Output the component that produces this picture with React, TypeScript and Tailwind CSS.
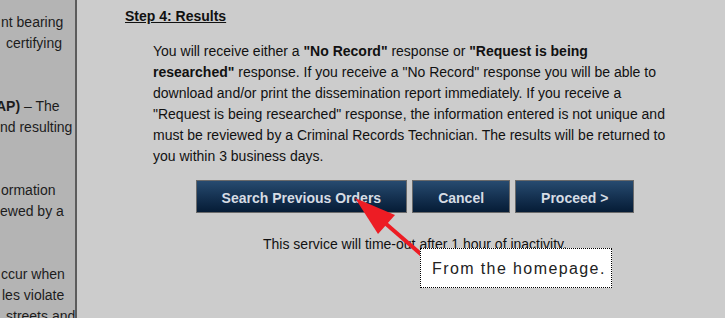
import React from 'react';

const sideLines: { text: React.ReactNode; indent: string }[] = [
  { text: 'nt bearing', indent: 'pl-[1px]' },
  { text: 'certifying', indent: 'pl-[6px]' },
  { text: '', indent: '' },
  { text: '', indent: '' },
  { text: <><b>AP)</b> – The</>, indent: '-ml-[4px]' },
  { text: 'nd resulting', indent: 'pl-0' },
  { text: '', indent: '' },
  { text: '', indent: '' },
  { text: 'ormation', indent: 'pl-[1px]' },
  { text: 'ewed by a', indent: 'pl-0' },
  { text: '', indent: '' },
  { text: '', indent: '' },
  { text: 'ccur when', indent: 'pl-[1px]' },
  { text: 'les violate', indent: 'pl-[2px]' },
  { text: 'streets and', indent: 'pl-[6px]' },
];

function NavButton({ label }: { label: string }) {
  return (
    <button className="border border-[#6a6a6a] bg-gradient-to-b from-[#274b70] to-[#061c36] px-[25px] pt-[7px] pb-[3px] text-[14px] leading-[21px] font-bold text-[#d6dce4]">
      {label}
    </button>
  );
}

export default function App() {
  return (
    <div
      className="relative flex h-[318px] w-[725px] overflow-hidden bg-[#cccccc] text-[14px] leading-[21px] text-[#111]"
      style={{ fontFamily: '"Liberation Sans", Arial, sans-serif' }}
    >
      {/* left column, cut off by the screenshot */}
      <aside className="w-[77px] shrink-0 overflow-hidden border-r-2 border-[#5c5c5c] bg-[#b4b4b4] pt-[12px] text-[#1c1c1c]">
        {sideLines.map((l, i) => (
          <div key={i} className={`h-[21px] whitespace-nowrap ${l.indent}`}>
            {l.text}
          </div>
        ))}
      </aside>

      <main className="flex-1 pl-[48px] pt-[6px]">
        <h2 className="font-bold underline">Step 4: Results</h2>

        <div className="ml-[28px] mt-[14px] w-[524px]">
          <p className="whitespace-nowrap">
            You will receive either a <b>"No Record"</b> response or <b>"Request is being</b>
            <br />
            <b>researched"</b> response. If you receive a "No Record" response you will be able to
            <br />
            download and/or print the dissemination report immediately. If you receive a
            <br />
            "Request is being researched" response, the information entered is not unique and
            <br />
            must be reviewed by a Criminal Records Technician. The results will be returned to
            <br />
            you within 3 business days.
          </p>

          <div className="mt-[13px] flex justify-center gap-[5px]">
            <NavButton label="Search Previous Orders" />
            <NavButton label="Cancel" />
            <NavButton label="Proceed >" />
          </div>

          <p className="mt-[21px] text-center">This service will time-out after 1 hour of inactivity.</p>
        </div>
      </main>

      {/* annotation arrow */}
      <svg className="pointer-events-none absolute inset-0" width="725" height="318" viewBox="0 0 725 318">
        <line x1="385" y1="223" x2="430" y2="262" stroke="#ed1c24" strokeWidth="4" />
        <polygon points="355,198 378,234 395,215" fill="#ed1c24" />
      </svg>

      {/* annotation callout */}
      <div className="absolute left-[420px] top-[248px] flex h-[40px] w-[192px] items-center border border-dotted border-black bg-white pl-[11px] text-[16px] tracking-[1.4px] text-[#222]">
        From the homepage.
      </div>
    </div>
  );
}
